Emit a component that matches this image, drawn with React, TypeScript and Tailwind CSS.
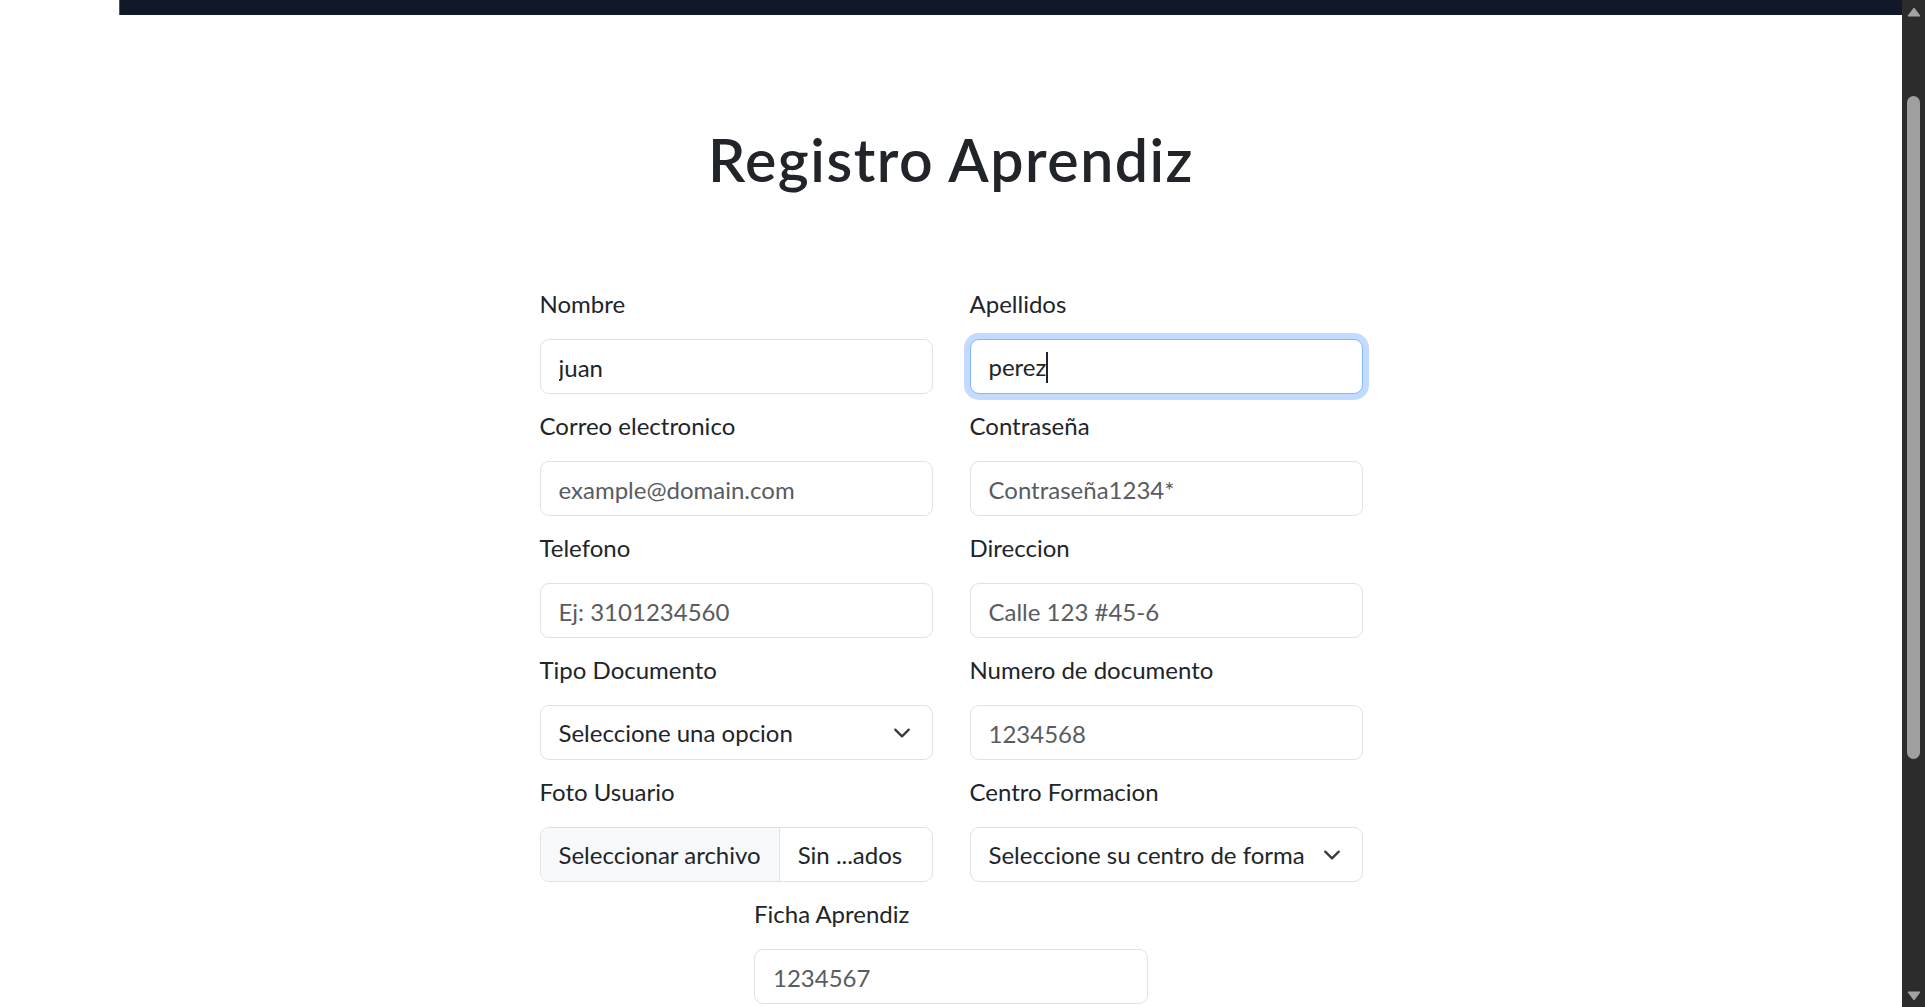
type Field = {
  label: string;
  kind: "text" | "select" | "file" | "focus";
  value?: string;
  placeholder?: string;
};

const fields: Field[] = [
  { label: "Nombre", kind: "text", value: "juan" },
  { label: "Apellidos", kind: "focus", value: "perez" },
  { label: "Correo electronico", kind: "text", placeholder: "example@domain.com" },
  { label: "Contraseña", kind: "text", placeholder: "Contraseña1234*" },
  { label: "Telefono", kind: "text", placeholder: "Ej: 3101234560" },
  { label: "Direccion", kind: "text", placeholder: "Calle 123 #45-6" },
  { label: "Tipo Documento", kind: "select", value: "Seleccione una opcion" },
  { label: "Numero de documento", kind: "text", placeholder: "1234568" },
  { label: "Foto Usuario", kind: "file" },
  { label: "Centro Formacion", kind: "select", value: "Seleccione su centro de forma" },
];

const boxBase = "h-[55px] w-full rounded-[9px] border bg-white text-[24px] text-[#212529] pt-[2px]";

function Chevron() {
  return (
    <svg width="18" height="18" viewBox="0 0 16 16" className="shrink-0">
      <path d="m2 5 6 6 6-6" fill="none" stroke="#343a40" strokeWidth="2" strokeLinecap="round" strokeLinejoin="round" />
    </svg>
  );
}

function Control({ f }: { f: Field }) {
  if (f.kind === "select") {
    return (
      <div className={`${boxBase} border-[#dee2e6] flex items-center gap-[15px] pl-[18px] pr-[21px]`}>
        <span className="flex-1 min-w-0 overflow-hidden whitespace-nowrap">{f.value}</span>
        <Chevron />
      </div>
    );
  }
  if (f.kind === "file") {
    return (
      <div className={`h-[55px] w-full rounded-[9px] border border-[#dee2e6] bg-white text-[24px] text-[#212529] flex items-stretch overflow-hidden`}>
        <span className="flex items-center pt-[2px] px-[18px] bg-[#f8f9fa] border-r border-[#dee2e6]">Seleccionar archivo</span>
        <span className="flex items-center pt-[2px] px-[18px] whitespace-nowrap">Sin ...ados</span>
      </div>
    );
  }
  if (f.kind === "focus") {
    return (
      <div className={`${boxBase} border-[#86b7fe] shadow-[0_0_0_6px_rgba(13,110,253,0.25)] flex items-center px-[18px]`}>
        <span>{f.value}</span>
        <span className="w-[2px] h-[31px] bg-[#212529]" />
      </div>
    );
  }
  return (
    <input
      readOnly
      defaultValue={f.value}
      placeholder={f.placeholder}
      className={`${boxBase} border-[#dee2e6] px-[18px] outline-none placeholder:text-[#595c5f]`}
    />
  );
}

function FormField({ f }: { f: Field }) {
  return (
    <div>
      <label className="block text-[24px] leading-[36px] text-[#212529] mb-[17px]">{f.label}</label>
      <Control f={f} />
    </div>
  );
}

export default function App() {
  return (
    <div className="flex h-screen overflow-hidden bg-white font-['Lato',sans-serif]">
      <main className="flex-1 min-w-0">
        <div className="flex h-[15px]">
          <div className="w-[119px]" />
          <div className="flex-1 bg-[#111827] border-l border-[#4b5563]" />
        </div>

        <h1 className="mt-[110px] text-center text-[59px] leading-[1.2] tracking-[1.5px] font-semibold text-[#212529]">
          Registro Aprendiz
        </h1>

        <div className="mx-auto mt-[90px] grid w-[823px] grid-cols-2 gap-x-[37px] gap-y-[14px]">
          {fields.map((f) => (
            <FormField key={f.label} f={f} />
          ))}
          <div className="col-span-2 justify-self-center w-[394px]">
            <FormField f={{ label: "Ficha Aprendiz", kind: "text", placeholder: "1234567" }} />
          </div>
        </div>
      </main>

      {/* fake scrollbar */}
      <div className="w-[23px] shrink-0 bg-[#2c2c2c] flex flex-col items-center">
        <svg width="14" height="10" viewBox="0 0 14 10" className="mt-[7px]">
          <path d="M7 1 13 9H1z" fill="#a3a3a3" stroke="#a3a3a3" strokeLinejoin="round" />
        </svg>
        <div className="mt-[79px] h-[663px] w-[13px] rounded-full bg-[#9f9f9f]" />
        <div className="flex-1" />
        <svg width="14" height="10" viewBox="0 0 14 10" className="mb-[6px]">
          <path d="M1 1h12L7 9z" fill="#a3a3a3" stroke="#a3a3a3" strokeLinejoin="round" />
        </svg>
      </div>
    </div>
  );
}
